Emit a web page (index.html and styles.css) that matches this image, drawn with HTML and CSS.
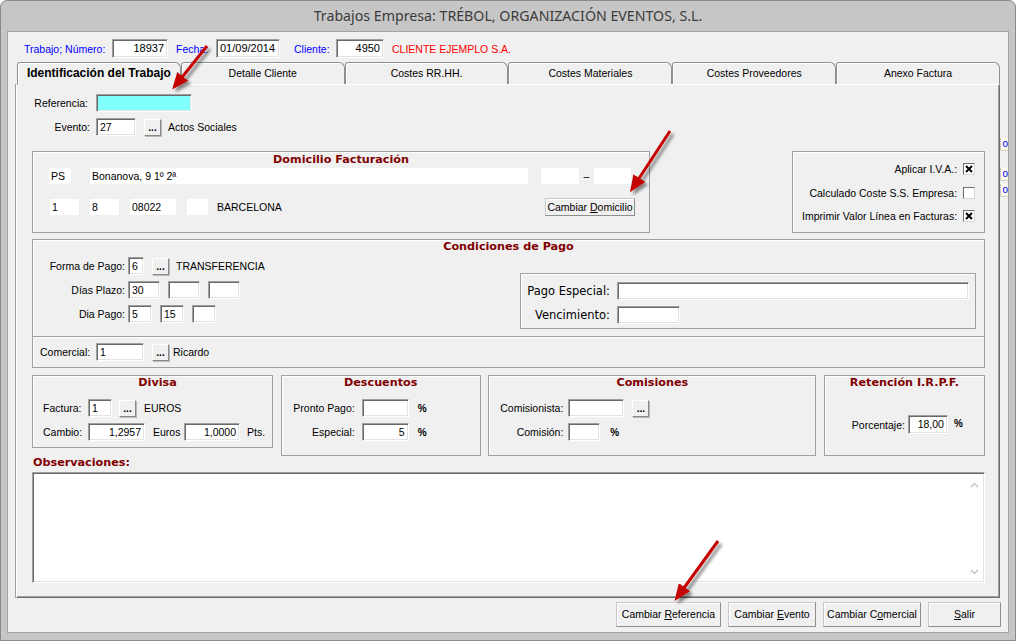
FILE: index.html
```html
<!DOCTYPE html>
<html lang="es">
<head>
  <meta charset="UTF-8" />
  <title>Trabajos Empresa</title>
  <link rel="stylesheet" href="styles.css">
</head>
<body>
<div class="window">
  <div class="titlebar">Trabajos Empresa: TRÉBOL, ORGANIZACIÓN EVENTOS, S.L.</div>

  <div class="client">
    <div class="head">
      <span class="hl w88">Trabajo; Número:</span>
      <span class="in w56 r">18937</span>
      <span class="hl w40 ml8">Fecha:</span>
      <span class="in w64">01/09/2014</span>
      <span class="hl w42 ml14">Cliente:</span>
      <span class="in w48 r">4950</span>
      <span class="cliente ml8">CLIENTE EJEMPLO S.A.</span>
    </div>

    <div class="mid">
      <div class="book">
        <div class="tabs">
          <div class="tab on">Identificación del Trabajo</div>
          <div class="tab">Detalle Cliente</div>
          <div class="tab">Costes RR.HH.</div>
          <div class="tab">Costes Materiales</div>
          <div class="tab">Costes Proveedores</div>
          <div class="tab">Anexo Factura</div>
        </div>

        <div class="page">
          <div class="row ref">
            <span class="lbl">Referencia:</span>
            <span class="in w96 cyan"></span>
          </div>
          <div class="row evt">
            <span class="lbl">Evento:</span>
            <span class="in w40">27</span>
            <span class="dots ml8">...</span>
            <span class="ml7">Actos Sociales</span>
          </div>

          <div class="groups top">
            <div class="box dom">
              <div class="box-title">Domicilio Facturación</div>
              <div class="row dom1">
                <span class="fld w22">PS</span>
                <span class="fld w438 ml19">Bonanova, 9 1º 2ª</span>
                <span class="fld w38 ml13"></span>
                <span class="dash">–</span>
                <span class="fld w37"></span>
              </div>
              <div class="row dom2">
                <span class="fld w29">1</span>
                <span class="fld w29 ml11">8</span>
                <span class="fld w46 ml11">08022</span>
                <span class="fld w21 ml11"></span>
                <span class="ml9">BARCELONA</span>
                <span class="btn small">Cambiar <u>D</u>omicilio</span>
              </div>
            </div>

            <div class="box checks">
              <div class="chk">Aplicar I.V.A.: <span class="cb"><svg width="8" height="8" viewBox="0 0 8 8"><path d="M1 1L7 7M7 1L1 7" stroke="#000" stroke-width="2"/></svg></span></div>
              <div class="chk">Calculado Coste S.S. Empresa: <span class="cb"></span></div>
              <div class="chk">Imprimir Valor Línea en Facturas: <span class="cb"><svg width="8" height="8" viewBox="0 0 8 8"><path d="M1 1L7 7M7 1L1 7" stroke="#000" stroke-width="2"/></svg></span></div>
            </div>
          </div>

          <div class="box cond">
            <div class="box-title">Condiciones de Pago</div>
            <div class="cond-body">
              <div class="cond-left">
                <div class="row">
                  <span class="lbl">Forma de Pago:</span>
                  <span class="in w16">6</span>
                  <span class="dots ml8">...</span>
                  <span class="ml7">TRANSFERENCIA</span>
                </div>
                <div class="row">
                  <span class="lbl">Días Plazo:</span>
                  <span class="in w32">30</span>
                  <span class="in w32 ml8"></span>
                  <span class="in w32 ml8"></span>
                </div>
                <div class="row">
                  <span class="lbl">Dia Pago:</span>
                  <span class="in w24">5</span>
                  <span class="in w24 ml8">15</span>
                  <span class="in w24 ml8"></span>
                </div>
              </div>
              <div class="box esp">
                <div class="row">
                  <span class="lbl">Pago Especial:</span>
                  <span class="in w352"></span>
                </div>
                <div class="row">
                  <span class="lbl">Vencimiento:</span>
                  <span class="in w63"></span>
                </div>
              </div>
            </div>
          </div>
          <div class="box comercial">
            <div class="row">
              <span class="lbl">Comercial:</span>
              <span class="in w48">1</span>
              <span class="dots ml8">...</span>
              <span class="ml4">Ricardo</span>
            </div>
          </div>

          <div class="groups bottom">
            <div class="box divisa">
              <div class="box-title">Divisa</div>
              <div class="row">
                <span class="lbl">Factura:</span>
                <span class="in w24">1</span>
                <span class="dots ml7">...</span>
                <span class="ml8">EUROS</span>
              </div>
              <div class="row">
                <span class="lbl">Cambio:</span>
                <span class="in w57 r">1,2957</span>
                <span class="unit ml8">Euros</span>
                <span class="in w56 r">1,0000</span>
                <span class="ml7">Pts.</span>
              </div>
            </div>

            <div class="box desc">
              <div class="box-title">Descuentos</div>
              <div class="row">
                <span class="lbl">Pronto Pago:</span>
                <span class="in w47"></span>
                <span class="pct ml9">%</span>
              </div>
              <div class="row">
                <span class="lbl">Especial:</span>
                <span class="in w47 r">5</span>
                <span class="pct ml9">%</span>
              </div>
            </div>

            <div class="box comi">
              <div class="box-title">Comisiones</div>
              <div class="row">
                <span class="lbl">Comisionista:</span>
                <span class="in w56"></span>
                <span class="dots ml8">...</span>
              </div>
              <div class="row">
                <span class="lbl">Comisión:</span>
                <span class="in w32"></span>
                <span class="pct ml10">%</span>
              </div>
            </div>

            <div class="box ret">
              <div class="box-title">Retención I.R.P.F.</div>
              <div class="row">
                <span class="lbl">Porcentaje:</span>
                <span class="in w40 r">18,00</span>
                <span class="pct up ml6">%</span>
              </div>
            </div>
          </div>

          <div class="obs-title">Observaciones:</div>
          <div class="memo">
            <div class="scroll">
              <svg width="9" height="6" viewBox="0 0 9 6"><path d="M1 5L4.5 1.5L8 5" fill="none" stroke="#c4c4c4" stroke-width="1.4"/></svg>
              <svg width="9" height="6" viewBox="0 0 9 6"><path d="M1 1L4.5 4.5L8 1" fill="none" stroke="#c4c4c4" stroke-width="1.4"/></svg>
            </div>
          </div>
        </div>
      </div>

      <div class="edge">
        <div class="ghost">o</div>
        <div class="ghost g2">o</div>
        <div class="ghost g3">o</div>
      </div>
    </div>

    <div class="actions">
      <span class="btn b105">Cambiar <u>R</u>eferencia</span>
      <span class="btn b88">Cambiar <u>E</u>vento</span>
      <span class="btn b98">Cambiar C<u>o</u>mercial</span>
      <span class="btn b73"><u>S</u>alir</span>
    </div>
  </div>

  <!-- red annotation arrows -->
  <svg class="arrows" width="1017" height="641" viewBox="0 0 1017 641">
    <defs>
      <filter id="sh" x="-50%" y="-50%" width="200%" height="200%">
        <feDropShadow dx="3" dy="3" stdDeviation="1.6" flood-color="#000" flood-opacity="0.45"/>
      </filter>
      <marker id="head" markerWidth="18" markerHeight="14" refX="6" refY="7" orient="auto" markerUnits="userSpaceOnUse">
        <path d="M0 0L17 7L0 14z" fill="#c40000"/>
      </marker>
    </defs>
    <g filter="url(#sh)" stroke="#c40000" stroke-width="3" marker-end="url(#head)">
      <line x1="207" y1="46" x2="179" y2="81"/>
      <line x1="670" y1="131" x2="636" y2="183"/>
      <line x1="718" y1="541" x2="681" y2="592"/>
    </g>
  </svg>
</div>
</body>
</html>
```

FILE: styles.css
```css
* {
  box-sizing: border-box;
}
body {
  margin: 0;
  background: #fff;
  font-family: "Liberation Sans", Arial, sans-serif;
  font-size: 10.5px;
  color: #000;
}
.window {
  position: relative;
  width: 1016px;
  height: 641px;
  background: #c6c6c6;
  border: 1px solid #8a8a8a;
  border-radius: 7px 7px 0 0;
  padding: 0 6px 7px 6px;
  display: flex;
  flex-direction: column;
}
.titlebar {
  height: 30px;
  line-height: 30px;
  text-align: center;
  font-family: "Noto Sans", sans-serif;
  font-size: 14.2px;
  color: #3b3b3b;
}
.client {
  flex: 1;
  background: #f0f0f0;
  border: 1px solid #a3a3a3;
  display: flex;
  flex-direction: column;
}

/* header line */
.head {
  display: flex;
  align-items: center;
  height: 19px;
  margin: 7px 0 0 16px;
}
.head .in {
  height: 19px;
  font-size: 11px;
}
.hl {
  color: #0000ff;
}
.cliente {
  color: #ff0000;
}

/* generic bits */
.row {
  display: flex;
  align-items: center;
  white-space: nowrap;
}
.in {
  display: inline-block;
  height: 18px;
  background: #fff;
  border: 1px solid;
  border-color: #a0a0a0 #fff #fff #a0a0a0;
  box-shadow: inset 1px 1px 0 #696969, inset -1px -1px 0 #e3e3e3;
  padding: 1px 3px 0 3px;
  line-height: 15px;
  white-space: nowrap;
  overflow: hidden;
  flex: none;
}
.in.r {
  text-align: right;
}
.in.cyan {
  background: #80ffff;
}
.fld {
  display: inline-block;
  height: 16px;
  line-height: 16px;
  background: #fff;
  padding: 0 2px;
  flex: none;
}
.dots {
  display: inline-block;
  width: 17px;
  height: 17px;
  flex: none;
  border: 1px solid;
  border-color: #fff #8a8a8a #8a8a8a #fff;
  box-shadow: 1px 1px 0 #b9b9b9;
  font-weight: bold;
  text-align: center;
  line-height: 16px;
  font-size: 10px;
}
.btn {
  display: inline-block;
  height: 25px;
  line-height: 23px;
  text-align: center;
  background: #f0f0f0;
  border: 1px solid;
  border-color: #c8c8c8 #8e8e8e #8e8e8e #c8c8c8;
  box-shadow: inset 1px 1px 0 #fff;
  font-size: 10.5px;
  white-space: nowrap;
}
.btn.small {
  width: 90px;
  height: 18px;
  line-height: 16px;
  margin: 0 14px 0 auto;
}
.pct {
  font-weight: bold;
  font-size: 10px;
}
.pct.up {
  align-self: flex-start;
  margin-top: 3px;
}

.w16 { width: 16px; }
.w21 { width: 21px; }
.w22 { width: 22px; }
.w24 { width: 24px; }
.w29 { width: 29px; }
.w32 { width: 32px; }
.w37 { width: 37px; }
.w38 { width: 38px; }
.w40 { width: 40px; }
.w42 { width: 42px; }
.w46 { width: 46px; }
.w47 { width: 47px; }
.w48 { width: 48px; }
.w56 { width: 56px; }
.w57 { width: 57px; }
.w63 { width: 63px; }
.w64 { width: 64px; }
.w88 { width: 88px; }
.w96 { width: 96px; }
.w352 { width: 352px; }
.w438 { width: 438px; }
.ml4 { margin-left: 4px; }
.ml6 { margin-left: 6px; }
.ml7 { margin-left: 7px; }
.ml8 { margin-left: 8px; }
.ml9 { margin-left: 9px; }
.ml10 { margin-left: 10px; }
.ml11 { margin-left: 11px; }
.ml13 { margin-left: 13px; }
.ml14 { margin-left: 14px; }
.ml19 { margin-left: 19px; }

/* tabs */
.mid {
  display: flex;
  margin: 4px 0 0 8px;
}
.book {
  width: 984px;
}
.tabs {
  display: flex;
  height: 22px;
  position: relative;
  z-index: 1;
}
.tab {
  flex: 1;
  height: 22px;
  background: #f0f0f0;
  border: 1px solid #8f8f8f;
  border-bottom: none;
  border-radius: 3px 6px 0 0;
  box-shadow: inset 1px 1px 0 #fff;
  text-align: center;
  line-height: 21px;
  font-size: 10.5px;
}
.tab.on {
  height: 23px;
  margin-left: 1px;
  font-weight: bold;
  font-size: 12px;
}

/* tab page */
.page {
  height: 514px;
  border: 1px solid;
  border-color: #fff #6d6d6d #6d6d6d #fff;
  box-shadow: inset -1px -1px 0 #a0a0a0, -1px 0 0 #a0a0a0;
  padding: 0 14px 0 15px;
}
.ref {
  margin-top: 9px;
  height: 18px;
}
.evt {
  margin-top: 6px;
  height: 18px;
}
.ref .lbl {
  width: 56px;
  margin-right: 8px;
  text-align: right;
}
.evt .lbl {
  width: 58px;
  margin-right: 6px;
  text-align: right;
}

.box {
  border: 1px solid #a0a0a0;
  box-shadow: inset 1px 1px 0 #fff;
}
.box-title {
  font-family: "DejaVu Sans", Verdana, sans-serif;
  font-weight: bold;
  font-size: 11.2px;
  line-height: 14px;
  color: #800000;
  text-align: center;
}
.groups {
  display: flex;
  justify-content: space-between;
  align-items: flex-start;
}
.groups.top {
  margin-top: 15px;
}
.dom .box-title {
  padding-top: 1px;
}

.dom {
  width: 618px;
  height: 82px;
}
.dom1 {
  margin: 1px 0 0 16px;
}
.dom2 {
  margin: 14px 0 0 17px;
  height: 18px;
}
.dash {
  width: 15px;
  text-align: center;
}

.checks {
  width: 193px;
  height: 82px;
  padding: 11px 9px 0 0;
}
.chk {
  display: flex;
  align-items: center;
  justify-content: flex-end;
  height: 12px;
  margin-bottom: 11.5px;
  white-space: pre;
}
.cb {
  display: inline-flex;
  align-items: center;
  justify-content: center;
  width: 12px;
  height: 12px;
  margin-left: 3px;
  background: #fff;
  border: 1px solid;
  border-color: #707070 #d8d8d8 #d8d8d8 #707070;
}

/* condiciones */
.cond {
  margin-top: 6px;
  height: 98px;
}
.cond-body {
  display: flex;
  justify-content: space-between;
}
.cond-left {
  padding-top: 3px;
}
.cond-left .row {
  height: 18px;
  margin-bottom: 6px;
}
.cond-left .lbl {
  width: 92px;
  margin-right: 3px;
  text-align: right;
}
.esp {
  width: 456px;
  height: 56px;
  margin: 19px 8px 0 0;
  padding-top: 8px;
  font-family: "DejaVu Sans", Verdana, sans-serif;
  font-size: 11.5px;
}
.esp .row {
  height: 18px;
  margin-bottom: 6px;
}
.esp .lbl {
  width: 89px;
  margin-right: 7px;
  text-align: right;
}
.comercial {
  margin-top: -1px;
  height: 32px;
  padding: 6px 0 0 7px;
}
.comercial .row {
  height: 18px;
}
.comercial .lbl {
  width: 56px;
}

/* bottom groups */
.groups.bottom {
  margin-top: 7px;
}
.divisa {
  width: 241px;
  height: 73px;
  padding-left: 10px;
}
.desc {
  width: 200px;
  height: 81px;
}
.comi {
  width: 328px;
  height: 81px;
}
.ret {
  width: 161px;
  height: 81px;
}
.divisa .row, .desc .row, .comi .row {
  height: 18px;
  margin-top: 6px;
}
.divisa .box-title + .row, .desc .box-title + .row, .comi .box-title + .row {
  margin-top: 9px;
}
.divisa .lbl {
  width: 45px;
}
.unit {
  width: 31px;
}
.desc .lbl {
  width: 73px;
  margin-right: 7px;
  text-align: right;
}
.comi .lbl {
  width: 74px;
  margin-right: 5px;
  text-align: right;
}
.ret .row {
  height: 19px;
  margin-top: 25px;
}
.ret .in {
  height: 19px;
}
.ret .lbl {
  width: 80px;
  margin-right: 3px;
  text-align: right;
}

.obs-title {
  font-family: "DejaVu Sans", Verdana, sans-serif;
  font-weight: bold;
  font-size: 11.2px;
  line-height: 14px;
  color: #800000;
  margin: 0 0 0 1px;
}
.memo {
  height: 111px;
  margin-top: 2px;
  background: #fff;
  border: 1px solid;
  border-color: #a0a0a0 #fff #fff #a0a0a0;
  box-shadow: inset 1px 1px 0 #696969, inset -1px -1px 0 #e3e3e3;
  display: flex;
  justify-content: flex-end;
}
.scroll {
  width: 18px;
  display: flex;
  flex-direction: column;
  justify-content: space-between;
  align-items: center;
  padding: 9px 0 7px 0;
  margin-right: 1px;
}

/* controls peeking at the right edge */
.edge {
  width: 8px;
  padding-top: 76px;
}
.ghost {
  height: 13px;
  color: #0000ff;
  background: #fbf8ec;
  border-left: 1px solid #c8c8c8;
  border-bottom: 1px solid #d8d4c4;
  font-size: 10px;
  line-height: 12px;
  text-align: right;
}
.ghost.g2 {
  margin-top: 17px;
}
.ghost.g3 {
  margin-top: 3px;
}

/* buttons at the bottom */
.actions {
  display: flex;
  justify-content: flex-end;
  gap: 7px;
  margin-top: 4px;
  padding-right: 7px;
}
.b105 { width: 105px; }
.b88 { width: 88px; }
.b98 { width: 98px; }
.b73 { width: 73px; }

.arrows {
  position: absolute;
  top: -1px;
  left: -1px;
  z-index: 5;
  pointer-events: none;
}
```
